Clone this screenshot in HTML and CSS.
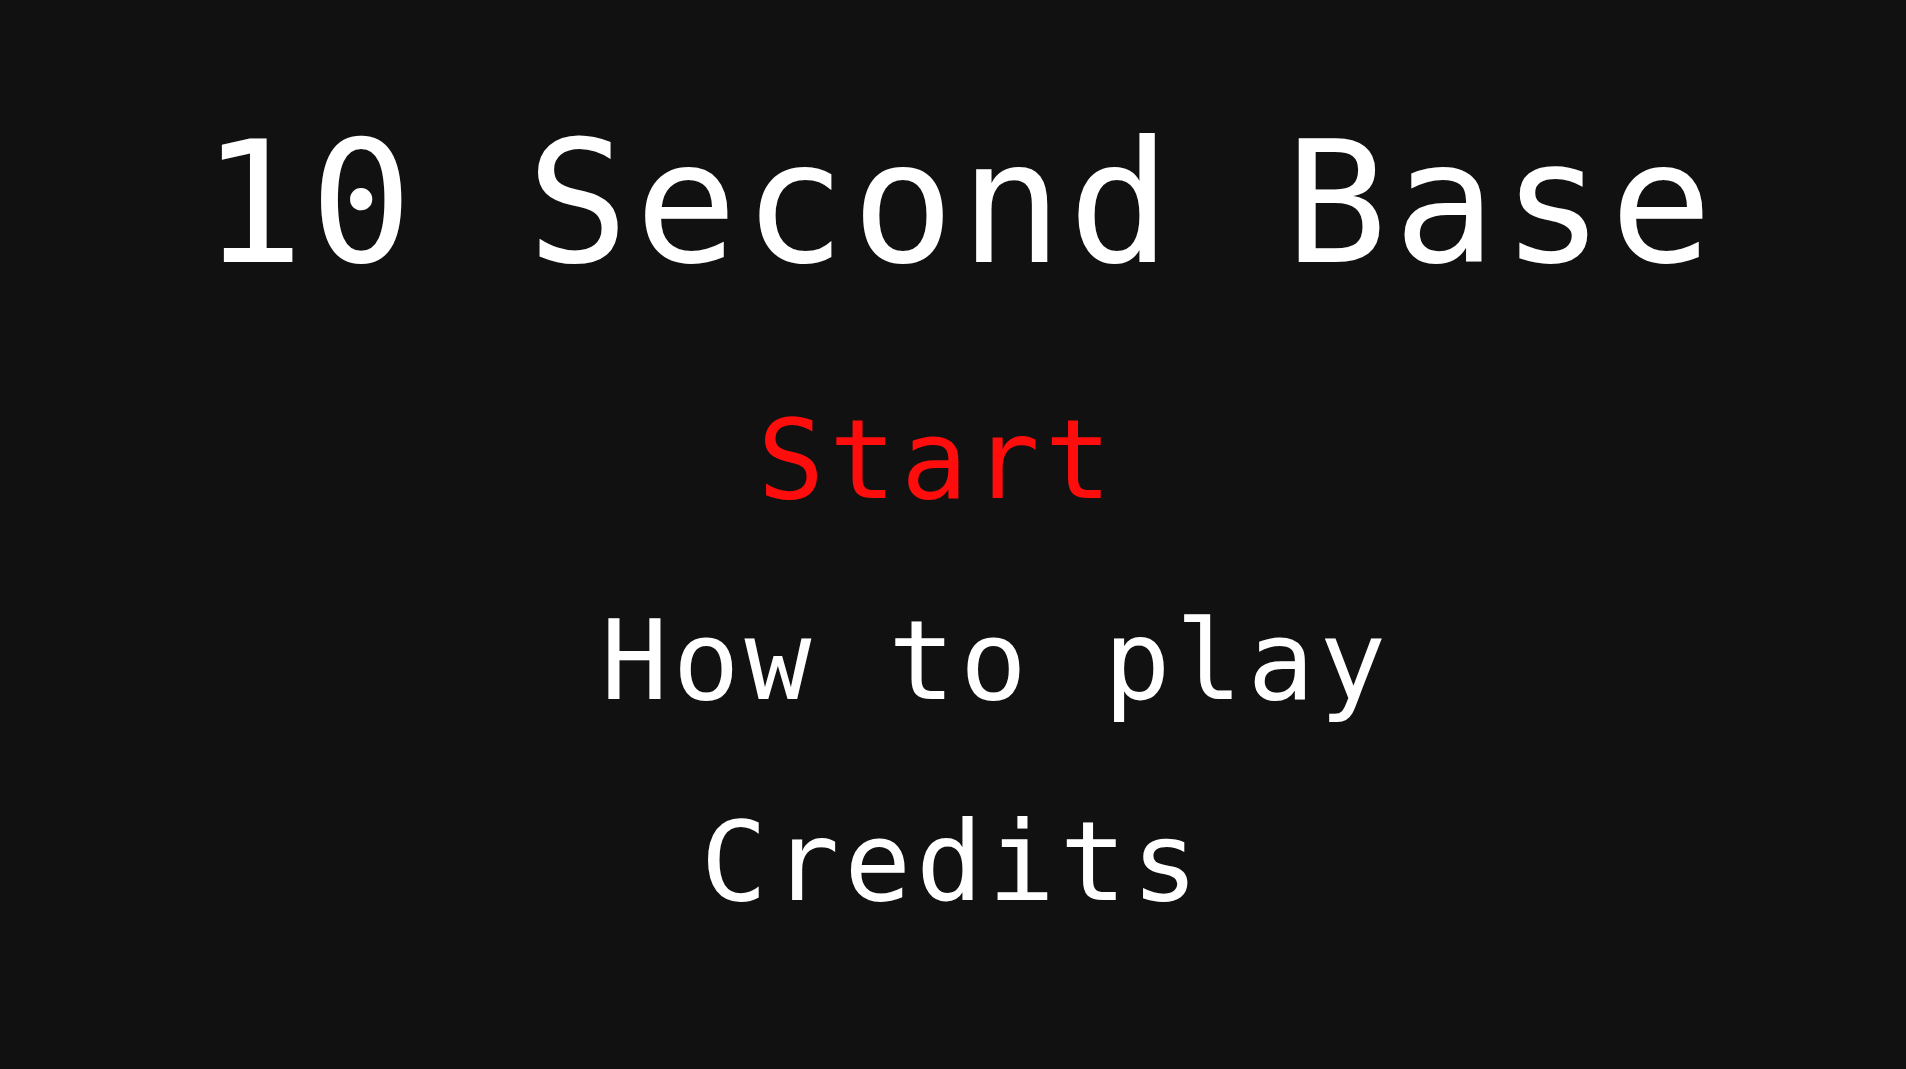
FILE: index.html
```html
<!DOCTYPE html>
<html lang="en">
<head>
<meta charset="utf-8">
<title>10 Second Base</title>
<link rel="stylesheet" href="styles.css">
</head>
<body>
<main class="screen">
  <h1 class="title">10 Second Base</h1>
  <nav class="menu">
    <div class="item item-start selected">Start</div>
    <div class="item item-how">How to play</div>
    <div class="item item-credits">Credits</div>
  </nav>
</main>
</body>
</html>
```
FILE: styles.css
```css
html, body {
  margin: 0;
  padding: 0;
  background: #111111;
}
.screen {
  width: 1906px;
  height: 1069px;
  box-sizing: border-box;
  padding-top: 118px;
  display: flex;
  flex-direction: column;
  align-items: center;
  font-family: "DejaVu Sans Mono", "Liberation Mono", monospace;
  color: #ffffff;
  overflow: hidden;
}
.title {
  margin: 0 0 0 14px;
  font-size: 170px;
  line-height: 170px;
  font-weight: normal;
  letter-spacing: 6px;
  white-space: pre;
}
.menu {
  margin-top: 71px;
  display: flex;
  flex-direction: column;
  align-items: center;
}
.item {
  font-size: 111px;
  line-height: 201px;
  letter-spacing: 5px;
  white-space: pre;
}
.selected {
  color: #ff0d0d;
}
.item-start { margin-right: 32px; }
.item-how { margin-left: 86px; }
.item-credits { margin-left: -2px; }
```
